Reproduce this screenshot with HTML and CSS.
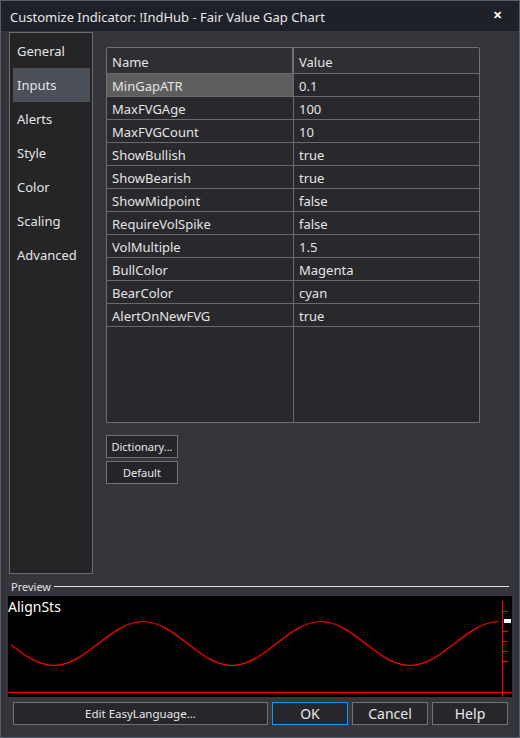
FILE: index.html
```html
<!DOCTYPE html>
<html lang="en">
<head>
    <meta charset="UTF-8">
    <title>Customize Indicator</title>
    <link rel="stylesheet" href="styles.css">
</head>
<body>
    <div class="window">
        <div class="titlebar">
            <span class="title">Customize Indicator: !IndHub - Fair Value Gap Chart</span>
            <span class="close">&#x2715;</span>
        </div>

        <div class="main">
            <ul class="tabs">
                <li>General</li>
                <li class="active">Inputs</li>
                <li>Alerts</li>
                <li>Style</li>
                <li>Color</li>
                <li>Scaling</li>
                <li>Advanced</li>
            </ul>

            <div class="content">
                <div class="grid">
                    <div class="grid-head">
                        <div class="cell name">Name</div>
                        <div class="cell value">Value</div>
                    </div>
                    <div class="row">
                        <div class="cell name selected">MinGapATR</div>
                        <div class="cell value">0.1</div>
                    </div>
                    <div class="row">
                        <div class="cell name">MaxFVGAge</div>
                        <div class="cell value">100</div>
                    </div>
                    <div class="row">
                        <div class="cell name">MaxFVGCount</div>
                        <div class="cell value">10</div>
                    </div>
                    <div class="row">
                        <div class="cell name">ShowBullish</div>
                        <div class="cell value">true</div>
                    </div>
                    <div class="row">
                        <div class="cell name">ShowBearish</div>
                        <div class="cell value">true</div>
                    </div>
                    <div class="row">
                        <div class="cell name">ShowMidpoint</div>
                        <div class="cell value">false</div>
                    </div>
                    <div class="row">
                        <div class="cell name">RequireVolSpike</div>
                        <div class="cell value">false</div>
                    </div>
                    <div class="row">
                        <div class="cell name">VolMultiple</div>
                        <div class="cell value">1.5</div>
                    </div>
                    <div class="row">
                        <div class="cell name">BullColor</div>
                        <div class="cell value">Magenta</div>
                    </div>
                    <div class="row">
                        <div class="cell name">BearColor</div>
                        <div class="cell value">cyan</div>
                    </div>
                    <div class="row">
                        <div class="cell name">AlertOnNewFVG</div>
                        <div class="cell value">true</div>
                    </div>
                    <div class="row filler">
                        <div class="cell name"></div>
                        <div class="cell value"></div>
                    </div>
                </div>

                <div class="side-buttons">
                    <button class="small-btn">Dictionary...</button>
                    <button class="small-btn">Default</button>
                </div>
            </div>
        </div>

        <div class="preview-label">
            <span>Preview</span>
            <span class="rule"></span>
        </div>

        <div class="chart">
            <span class="chart-title">AlignSts</span>
            <svg width="504" height="101" viewBox="0 0 504 101">
                <defs>
                    <clipPath id="plot">
                        <rect x="3" y="0" width="492" height="101"/>
                    </clipPath>
                </defs>
                <path clip-path="url(#plot)" fill="none" stroke="#ff0000" stroke-width="1.2"
                      d="M -43 25.5 C -10.6 25.5, 13.6 69.5, 46 69.5 C 78.4 69.5, 102.6 25.5, 135 25.5 C 167.4 25.5, 191.6 69.5, 224 69.5 C 256.4 69.5, 280.6 25.5, 313 25.5 C 345.4 25.5, 369.6 69.5, 402 69.5 C 434.4 69.5, 458.6 25.5, 491 25.5"/>
                <!-- axe de droite -->
                <rect x="0" y="96" width="504" height="1" fill="#ff0000"/>
                <rect x="494" y="5" width="1" height="96" fill="#ff0000"/>
                <rect x="495" y="15" width="5" height="1" fill="#ff0000"/>
                <rect x="495" y="35" width="5" height="1" fill="#ff0000"/>
                <rect x="495" y="45" width="5" height="1" fill="#ff0000"/>
                <rect x="495" y="55" width="5" height="1" fill="#ff0000"/>
                <rect x="495" y="65" width="5" height="1" fill="#ff0000"/>
                <rect x="496" y="23" width="7" height="4" fill="#ffffff"/>
            </svg>
        </div>

        <div class="footer">
            <button class="btn wide">Edit EasyLanguage...</button>
            <button class="btn primary">OK</button>
            <button class="btn">Cancel</button>
            <button class="btn">Help</button>
        </div>
    </div>
</body>
</html>
```

FILE: styles.css
```css
/* Fenêtre de base */
body {
    margin: 0;
    background-color: #35353b;
    font-family: "Noto Sans", "Open Sans", sans-serif;
}

.window {
    width: 520px;
    height: 738px;
    box-sizing: border-box;
    border: 1px solid #565c68;
    background-color: #35353b;
    color: #e4e4e4;
    display: flex;
    flex-direction: column;
}

.titlebar {
    height: 30px;
    background-color: #1f2128;
    display: flex;
    align-items: center;
    padding: 2px 0 0 9px;
    box-sizing: border-box;
    font-size: 13px;
    color: #e8e8e8;
}

.close {
    margin-left: auto;
    margin-right: 17px;
    margin-top: -6px;
    font-size: 11px;
    font-weight: bold;
    color: #ffffff;
}

.main {
    display: flex;
    gap: 13px;
    padding: 1px 0 0 8px;
}

/* Onglets de gauche */
.tabs {
    list-style: none;
    margin: 0;
    padding: 1px 2px 0 3px;
    width: 84px;
    height: 542px;
    box-sizing: border-box;
    border: 1px solid #6c6c6c;
    background-color: #252528;
    font-size: 13px;
}

.tabs li {
    height: 34px;
    line-height: 34px;
    padding-left: 4px;
    color: #e4e4e4;
}

.tabs li.active {
    background-color: #4a4f58;
}

/* Grille des paramètres */
.content {
    padding-top: 15px;
}

.grid {
    width: 374px;
    height: 376px;
    box-sizing: border-box;
    border: 1px solid #707070;
    border-radius: 2px 2px 0 0;
    background-color: #29292d;
    display: flex;
    flex-direction: column;
    font-size: 13px;
}

.grid-head {
    display: flex;
    height: 26px;
    border-bottom: 1px solid #6a6a6a;
    box-sizing: border-box;
    background-color: #2e2e33;
}

.grid-head .name {
    border-right: 2px solid #707070;
    width: 187px;
}

.row {
    display: flex;
    height: 23px;
    border-bottom: 1px solid #6a6a6a;
    box-sizing: border-box;
}

.row.filler {
    flex: 1;
    border-bottom: none;
}

.cell {
    padding: 2px 0 0 5px;
    display: flex;
    align-items: center;
    box-sizing: border-box;
    white-space: nowrap;
}

.name {
    width: 187px;
    border-right: 1px solid #6a6a6a;
}

.value {
    flex: 1;
}

.selected {
    background-color: #5e5e5e;
}

.side-buttons {
    display: flex;
    flex-direction: column;
    gap: 3px;
    margin-top: 12px;
}

.small-btn {
    width: 72px;
    height: 23px;
    padding: 0;
    border: 1px solid #747474;
    background-color: #252529;
    color: #e8e8e8;
    font-family: "Noto Sans", "Open Sans", sans-serif;
    font-size: 11px;
}

/* Aperçu */
.preview-label {
    display: flex;
    align-items: center;
    gap: 3px;
    height: 15px;
    margin: 5px 10px 2px 10px;
    font-size: 11px;
    color: #e0e0e0;
}

.rule {
    flex: 1;
    height: 1px;
    background-color: #e0e0e0;
}

.chart {
    position: relative;
    width: 504px;
    height: 101px;
    margin-left: 7px;
    background-color: #000000;
}

.chart svg {
    display: block;
}

.chart-title {
    position: absolute;
    left: 0;
    top: 1px;
    font-size: 14px;
    color: #ffffff;
}

/* Boutons du bas */
.footer {
    display: flex;
    gap: 4px;
    margin-top: 5px;
    padding-left: 12px;
}

.btn {
    width: 76px;
    height: 23px;
    padding: 0;
    border: 1px solid #747474;
    background-color: #27272b;
    color: #e8e8e8;
    font-family: "Noto Sans", "Open Sans", sans-serif;
    font-size: 14px;
}

.btn.wide {
    width: 255px;
    font-size: 11.5px;
}

.btn.primary {
    border-color: #0f9be8;
}
```
